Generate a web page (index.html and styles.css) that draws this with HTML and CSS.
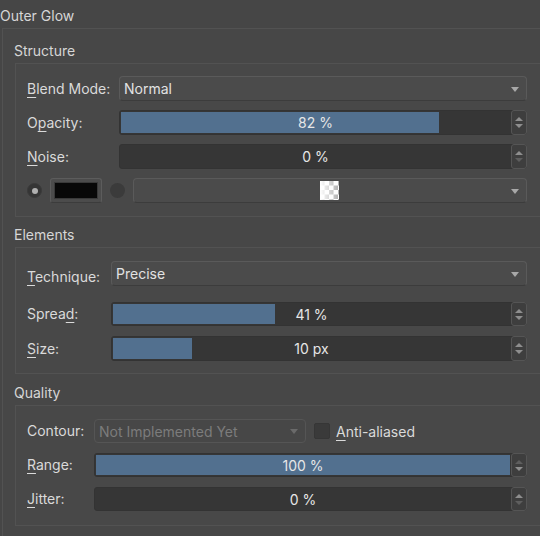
FILE: index.html
```html
<!DOCTYPE html>
<html>
<head>
<meta charset="utf-8">
<link rel="stylesheet" href="styles.css">
</head>
<body>
<div class="page">
  <div class="title">Outer Glow</div>
  <div class="outer">
    <div class="heading">Structure</div>
    <div class="group cols-structure">
      <div class="label"><u>B</u>lend Mode:</div>
      <div class="combo"><span>Normal</span><i class="arrow"></i></div>

      <div class="label">O<u>p</u>acity:</div>
      <div class="spin">
        <div class="track"><div class="fill" style="width:81.8%"></div><span class="value">82 %</span></div>
        <div class="btns"><i class="up"></i><i class="down"></i></div>
      </div>

      <div class="label"><u>N</u>oise:</div>
      <div class="spin">
        <div class="track"><span class="value">0 %</span></div>
        <div class="btns"><i class="up"></i><i class="down dim"></i></div>
      </div>

      <div class="color-row">
        <span class="radio on"></span>
        <span class="color-btn"><span class="swatch-black"></span></span>
        <span class="radio"></span>
        <div class="combo grow">
          <span class="grad">
            <svg width="19" height="19" viewBox="0 0 19 19">
              <defs>
                <pattern id="chk" width="9" height="9" patternUnits="userSpaceOnUse">
                  <rect width="9" height="9" fill="#ffffff"/>
                  <rect width="4.5" height="4.5" fill="#b0b0b0"/>
                  <rect x="4.5" y="4.5" width="4.5" height="4.5" fill="#b0b0b0"/>
                </pattern>
                <linearGradient id="fade" x1="0" y1="0" x2="1" y2="0">
                  <stop offset="0" stop-color="#ffffff" stop-opacity="1"/>
                  <stop offset="1" stop-color="#ffffff" stop-opacity="0"/>
                </linearGradient>
              </defs>
              <rect width="19" height="19" fill="url(#chk)"/>
              <rect width="19" height="19" fill="url(#fade)"/>
            </svg>
          </span>
          <i class="arrow"></i>
        </div>
      </div>
    </div>

    <div class="heading">Elements</div>
    <div class="group cols-elements">
      <div class="label"><u>T</u>echnique:</div>
      <div class="combo tech"><span>Precise</span><i class="arrow"></i></div>

      <div class="label">Sprea<u>d</u>:</div>
      <div class="spin h24">
        <div class="track"><div class="fill" style="width:40.7%"></div><span class="value">41 %</span></div>
        <div class="btns"><i class="up"></i><i class="down"></i></div>
      </div>

      <div class="label"><u>S</u>ize:</div>
      <div class="spin">
        <div class="track"><div class="fill" style="width:19.8%"></div><span class="value">10 px</span></div>
        <div class="btns"><i class="up"></i><i class="down"></i></div>
      </div>
    </div>

    <div class="heading q">Quality</div>
    <div class="group cols-quality">
      <div class="label">Contour:</div>
      <div class="contour-row">
        <div class="combo disabled"><span>Not Implemented Yet</span><i class="arrow"></i></div>
        <span class="checkbox"></span>
        <span class="check-label"><u>A</u>nti-aliased</span>
      </div>

      <div class="label"><u>R</u>ange:</div>
      <div class="spin h24">
        <div class="track"><div class="fill" style="width:100%"></div><span class="value">100 %</span></div>
        <div class="btns"><i class="up dim"></i><i class="down"></i></div>
      </div>

      <div class="label"><u>J</u>itter:</div>
      <div class="spin h24">
        <div class="track"><span class="value">0 %</span></div>
        <div class="btns"><i class="up"></i><i class="down dim"></i></div>
      </div>
    </div>
  </div>
</div>
</body>
</html>
```
FILE: styles.css
```css
html, body {
  margin: 0;
  padding: 0;
  background: #464646;
}
body {
  width: 540px;
  height: 536px;
  overflow: hidden;
  font-family: Inter, "Open Sans", "Liberation Sans", sans-serif;
  font-size: 14px;
  color: #dadada;
}
.page {
  width: 540px;
}
u {
  text-decoration: underline;
  text-underline-offset: 3px;
  text-decoration-thickness: 1px;
}
.title {
  height: 28px;
  box-sizing: border-box;
  padding-top: 4px;
  line-height: 24px;
  color: #d6d6d6;
}
.outer {
  margin-left: 2px;
  border-top: 1px solid #525252;
  border-left: 1px solid #525252;
  padding: 4px 0 20px 12px;
  background: #474747;
}
.heading {
  height: 30px;
  box-sizing: border-box;
  padding-top: 6px;
  line-height: 24px;
  margin-left: -1px;
  color: #d6d6d6;
}
.heading.q {
  height: 31px;
  padding-top: 7px;
}
.group {
  display: grid;
  align-items: center;
  row-gap: 9px;
  border: 1px solid #525252;
  border-right: none;
  padding: 12px 13px 13px 11px;
  background: #484848;
}
.cols-structure { grid-template-columns: 92px 1fr; }
.cols-elements { grid-template-columns: 84px 1fr; padding-top: 13px; padding-bottom: 12px; row-gap: 10px; }
.cols-quality { grid-template-columns: 67px 1fr; padding-top: 13px; padding-bottom: 14px; row-gap: 10px; }
.cols-elements .tech { margin-bottom: 6px; }

.label {
  white-space: nowrap;
  line-height: 24px;
  color: #dadada;
}

.combo {
  position: relative;
  height: 25px;
  box-sizing: border-box;
  border: 1px solid #5a5a5a;
  border-bottom-color: #3c3c3c;
  border-radius: 4px;
  background: #4b4b4b;
  padding-left: 4px;
  display: flex;
  align-items: center;
  color: #e2e2e2;
}
.combo.grow {
  flex: 1;
  justify-content: center;
}
.combo .arrow {
  position: absolute;
  right: 7px;
  top: 10px;
  width: 0;
  height: 0;
  border-left: 4.5px solid transparent;
  border-right: 4.5px solid transparent;
  border-top: 5px solid #a8a8a8;
}
.combo.disabled {
  width: 212px;
  height: 24px;
  background: #474747;
  border-color: #555555;
  color: #7c7c7c;
}
.combo.disabled .arrow {
  border-top-color: #6a6a6a;
  top: 9px;
}
.grad {
  display: flex;
  width: 19px;
  height: 19px;
  margin-left: -6px;
}

.spin {
  height: 25px;
  box-sizing: border-box;
  display: flex;
  background: #363636;
  border-radius: 3px;
  border: 1px solid #333333;
}
.spin.h24 { height: 24px; }
.track {
  position: relative;
  flex: 1;
  padding: 1px;
}
.fill {
  height: 100%;
  background: #52708f;
}
.value {
  position: absolute;
  inset: 0;
  display: flex;
  align-items: center;
  justify-content: center;
  color: #e6e6e6;
}
.btns {
  width: 16px;
  box-sizing: border-box;
  background: #3e3e3e;
  border: 1px solid #555555;
  border-radius: 3px;
  margin: -1px -1px -1px 0;
  display: flex;
  flex-direction: column;
  align-items: center;
  justify-content: center;
  gap: 3px;
}
.btns i {
  width: 0;
  height: 0;
  border-left: 4px solid transparent;
  border-right: 4px solid transparent;
}
.btns .up { border-bottom: 4px solid #8e8e8e; }
.btns .down { border-top: 4px solid #8e8e8e; }
.btns .up.dim { border-bottom-color: #5e5e5e; }
.btns .down.dim { border-top-color: #5e5e5e; }

.color-row {
  grid-column: 1 / -1;
  display: flex;
  align-items: center;
  gap: 8px;
  height: 25px;
}
.radio {
  width: 15px;
  height: 15px;
  box-sizing: border-box;
  border-radius: 50%;
  background: #3b3b3b;
  display: flex;
  align-items: center;
  justify-content: center;
}
.radio.on {
  background: #353535;
  border: 1px solid #3a3a3a;
}
.radio.on::after {
  content: "";
  width: 6px;
  height: 6px;
  border-radius: 50%;
  background: #b0b0b0;
}
.color-btn {
  width: 52px;
  height: 25px;
  box-sizing: border-box;
  border: 1px solid #5c5c5c;
  border-bottom-color: #3c3c3c;
  border-radius: 3px;
  background: #4c4c4c;
  display: flex;
  align-items: center;
  justify-content: center;
}
.swatch-black {
  width: 44px;
  height: 17px;
  box-sizing: border-box;
  background: #080808;
  border: 1px solid #3a3a3a;
}

.contour-row {
  display: flex;
  align-items: center;
  height: 24px;
}
.checkbox {
  width: 16px;
  height: 16px;
  box-sizing: border-box;
  margin-left: 8px;
  background: #3a3a3a;
  border: 1px solid #363636;
  border-radius: 2px;
}
.check-label {
  margin-left: 6px;
  white-space: nowrap;
  color: #dadada;
}
```
